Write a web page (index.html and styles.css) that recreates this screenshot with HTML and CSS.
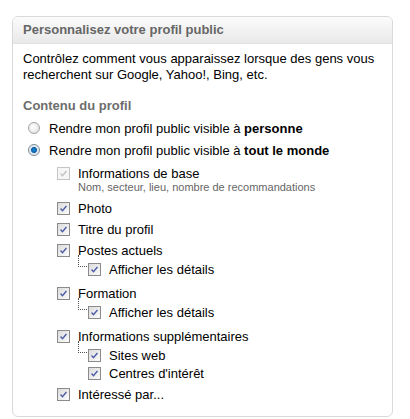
FILE: index.html
```html
<!DOCTYPE html>
<html lang="fr">
<head>
<meta charset="utf-8">
<link rel="stylesheet" href="styles.css">
</head>
<body>
<div class="panel">
  <div class="panel-head">Personnalisez votre profil public</div>
  <div class="panel-body">
    <p class="intro">Contrôlez comment vous apparaissez lorsque des gens vous recherchent sur Google, Yahoo!, Bing, etc.</p>
    <h3 class="section">Contenu du profil</h3>
    <div class="radio-row"><span class="radio"></span><span>Rendre mon profil public visible à <b>personne</b></span></div>
    <div class="radio-row"><span class="radio on"></span><span>Rendre mon profil public visible à <b>tout le monde</b></span></div>
    <ul class="opts">
      <li class="opt">
        <div class="row"><span class="cb disabled"><svg viewBox="0 0 13 13"><path d="M3 6.5 L5.3 9 L10 3.5" fill="none" stroke="#c2c2c2" stroke-width="1.6"/></svg></span><span>Informations de base</span></div>
        <div class="hint">Nom, secteur, lieu, nombre de recommandations</div>
      </li>
      <li class="opt"><div class="row"><span class="cb"><svg viewBox="0 0 13 13"><path d="M3 6.5 L5.3 9 L10 3.5" fill="none" stroke="#4b5ba8" stroke-width="1.6"/></svg></span><span>Photo</span></div></li>
      <li class="opt"><div class="row"><span class="cb"><svg viewBox="0 0 13 13"><path d="M3 6.5 L5.3 9 L10 3.5" fill="none" stroke="#4b5ba8" stroke-width="1.6"/></svg></span><span>Titre du profil</span></div></li>
      <li class="opt group">
        <div class="row"><span class="cb"><svg viewBox="0 0 13 13"><path d="M3 6.5 L5.3 9 L10 3.5" fill="none" stroke="#4b5ba8" stroke-width="1.6"/></svg></span><span>Postes actuels</span></div>
        <ul class="sub">
          <li class="row child first"><span class="cb"><svg viewBox="0 0 13 13"><path d="M3 6.5 L5.3 9 L10 3.5" fill="none" stroke="#4b5ba8" stroke-width="1.6"/></svg></span><span>Afficher les détails</span></li>
        </ul>
      </li>
      <li class="opt group">
        <div class="row"><span class="cb"><svg viewBox="0 0 13 13"><path d="M3 6.5 L5.3 9 L10 3.5" fill="none" stroke="#4b5ba8" stroke-width="1.6"/></svg></span><span>Formation</span></div>
        <ul class="sub">
          <li class="row child first"><span class="cb"><svg viewBox="0 0 13 13"><path d="M3 6.5 L5.3 9 L10 3.5" fill="none" stroke="#4b5ba8" stroke-width="1.6"/></svg></span><span>Afficher les détails</span></li>
        </ul>
      </li>
      <li class="opt group">
        <div class="row"><span class="cb"><svg viewBox="0 0 13 13"><path d="M3 6.5 L5.3 9 L10 3.5" fill="none" stroke="#4b5ba8" stroke-width="1.6"/></svg></span><span>Informations supplémentaires</span></div>
        <ul class="sub tight">
          <li class="row child first"><span class="cb"><svg viewBox="0 0 13 13"><path d="M3 6.5 L5.3 9 L10 3.5" fill="none" stroke="#4b5ba8" stroke-width="1.6"/></svg></span><span>Sites web</span></li>
          <li class="row child"><span class="cb"><svg viewBox="0 0 13 13"><path d="M3 6.5 L5.3 9 L10 3.5" fill="none" stroke="#4b5ba8" stroke-width="1.6"/></svg></span><span>Centres d'intérêt</span></li>
        </ul>
      </li>
      <li class="opt group"><div class="row"><span class="cb"><svg viewBox="0 0 13 13"><path d="M3 6.5 L5.3 9 L10 3.5" fill="none" stroke="#4b5ba8" stroke-width="1.6"/></svg></span><span>Intéressé par...</span></div></li>
    </ul>
  </div>
</div>
</body>
</html>
```
FILE: styles.css
```css
html, body { margin: 0; padding: 0; background: #fff; }
body {
  font-family: "Liberation Sans", Arial, sans-serif;
  font-size: 13px;
  color: #000;
  padding: 16px 0 0 12px;
}
.panel {
  width: 379px;
  height: 399px;
  border: 1px solid #d9d9d9;
  border-radius: 6px;
  overflow: hidden;
}
.panel-head {
  height: 26px;
  line-height: 26px;
  padding-left: 10px;
  font-weight: bold;
  font-size: 13px;
  color: #666;
  background: linear-gradient(#fbfbfb, #e9e9e9);
  border-bottom: 1px solid #e0e0e0;
}
.panel-body { padding: 7px 10px 0 10px; }
.intro { margin: 0; line-height: 16px; }
.section {
  margin: 15px 0 3px;
  font-size: 13px;
  font-weight: bold;
  color: #6d6d6d;
  line-height: 16px;
}
.radio-row {
  display: flex;
  align-items: center;
  gap: 9px;
  height: 22px;
  padding-left: 5px;
}
.radio {
  width: 12px; height: 12px;
  border-radius: 50%;
  box-sizing: border-box;
  border: 1px solid #a3a3a3;
  background: radial-gradient(circle at 40% 40%, #fff 0, #e6e6e6 70%, #cfcfcf 100%);
  flex: none;
}
.radio.on {
  border-color: #7a8a99;
  background: radial-gradient(circle, #1f8fd6 0, #0a5ca8 2.5px, #dfe6ec 3.5px, #f4f4f4 100%);
}
.radio-row b { font-weight: bold; }
.opts { list-style: none; margin: 0; padding: 2px 0 0 34px; }
.opt { margin: 0; }
.row { display: flex; align-items: center; gap: 8px; height: 21px; }
.cb {
  width: 13px; height: 13px;
  box-sizing: border-box;
  border: 1px solid #8a8a8a;
  background: linear-gradient(135deg, #dcdcdc, #fbfbfb);
  flex: none;
  display: block;
}
.cb svg { display: block; width: 11px; height: 11px; }
.cb.disabled { border-color: #c4c4c4; background: #f6f6f6; }
.hint { font-size: 11px; color: #666; padding-left: 21px; margin: -3px 0 4px; line-height: 13px; }
.sub { list-style: none; margin: -1px 0 5px; padding: 0 0 0 31px; }
.sub.tight { margin-bottom: 2px; }
.child { position: relative; height: 18px; }
.child.first::before {
  content: "";
  position: absolute;
  left: -10px; top: -5px;
  width: 8px; height: 11px;
  border-left: 1px dotted #555;
  border-bottom: 1px dotted #555;
}
```
